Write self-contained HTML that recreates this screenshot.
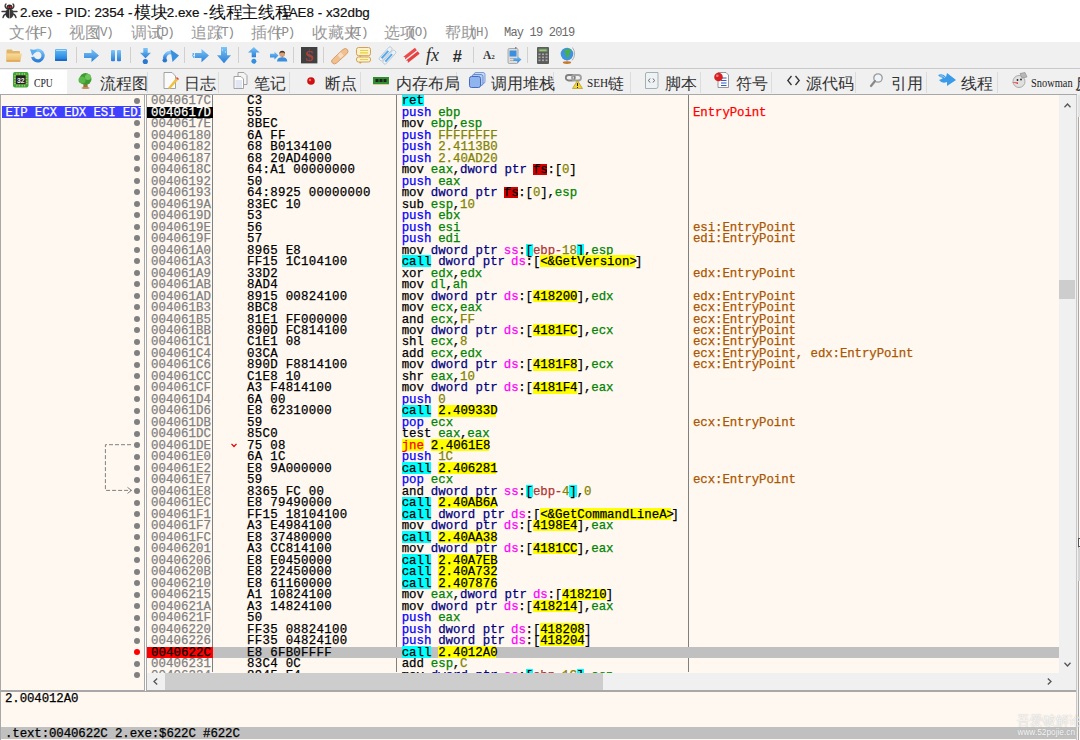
<!DOCTYPE html>
<html><head><meta charset="utf-8"><title>x32dbg</title>
<style>
*{margin:0;padding:0;box-sizing:border-box}
html,body{width:1080px;height:740px;overflow:hidden;background:#fff}
body{position:relative;font-family:"Liberation Sans",sans-serif}
.a{position:absolute}
svg{position:absolute;overflow:visible}
.row{position:absolute;height:11.49px;margin-top:1.6px;-webkit-text-stroke:0.25px currentColor;white-space:pre;font-family:"Liberation Mono",monospace;font-size:12.4px;line-height:11.49px}
.pp{color:#0000ff}
.rb{position:relative;left:1.6px}
.cl{background:#00ffff;color:#000}
.jc{background:#ffff00;color:#ff0000}
.rg{color:#008300}
.vl{color:#828200}
.sz{color:#000080}
.sg{color:#ff00ff}
.fs{background:#d40000;color:#000}
.bk{background:#00ffff}
.br{color:#b03434}
.ad{background:#ffff00;color:#000}
.drow{position:absolute;height:11.7px;width:600px;font-family:"Liberation Mono",monospace;font-size:12.4px;line-height:11.49px;-webkit-text-stroke:0.25px currentColor;color:#000}
.tk{position:absolute;top:0;height:11.7px;padding-top:1.6px;white-space:pre;letter-spacing:0}
.mi{position:absolute;top:26px;font-size:12px;line-height:14px;color:#8a8a8a;white-space:pre;font-family:"Liberation Serif",serif}
.cjm{font-family:"Liberation Sans",sans-serif;font-size:15px;letter-spacing:0}
.tl{position:absolute;top:76px;font-size:12px;line-height:14px;color:#222;white-space:pre;font-family:"Liberation Serif",serif}
.cjt{font-family:"Liberation Sans",sans-serif;font-size:15.5px}
.sep{position:absolute;top:47px;width:1px;height:16px;background:#d0d0d0}
.tsep{position:absolute;top:72px;width:1px;height:21px;background:#dcdcdc}
</style></head><body>

<svg style="left:1px;top:3px" width="17" height="16" viewBox="0 0 17 16">
<g stroke="#3a3a3a" stroke-width="1.4" fill="none" stroke-linecap="round">
<path d="M5 1 Q3 3 5.5 5.5"/><path d="M12 1 Q14 3 11.5 5.5"/><path d="M1 8.5 H5"/><path d="M12 8.5 H16"/>
<path d="M2 14.5 Q3 11 5.5 11"/><path d="M15 14.5 Q14 11 11.5 11"/></g>
<path d="M8.3 5.5 Q4.5 6 4.5 10.5 Q4.8 15 8.3 15.5Z" fill="#2e2e2e"/><path d="M8.7 5.5 Q12.5 6 12.5 10.5 Q12.2 15 8.7 15.5Z" fill="#3a3a3a"/>
<ellipse cx="8.5" cy="4" rx="3" ry="2.6" fill="#2a2a2a"/><circle cx="7.4" cy="4.2" r="0.9" fill="#d02020"/><circle cx="9.6" cy="4.2" r="0.9" fill="#d02020"/></svg>
<div class="a" style="left:20px;top:3.5px;font-size:13.4px;line-height:17px;color:#111;-webkit-text-stroke:0.2px #111;white-space:pre">2.exe - PID: 2354 - </div>
<div class="a" style="left:133.5px;top:3.5px;font-size:17px;line-height:17px;color:#111;white-space:pre">模块</div>
<div class="a" style="left:159.3px;top:3.5px;font-size:13.4px;line-height:17px;color:#111;-webkit-text-stroke:0.2px #111;white-space:pre">: 2.exe - </div>
<div class="a" style="left:209px;top:3.5px;font-size:17px;line-height:17px;color:#111;white-space:pre">线程</div>
<div class="a" style="left:235.5px;top:3.5px;font-size:13.4px;line-height:17px;color:#111;-webkit-text-stroke:0.2px #111;white-space:pre">: </div>
<div class="a" style="left:240.8px;top:3.5px;font-size:17px;line-height:17px;color:#111;white-space:pre">主线程</div>
<div class="a" style="left:277.5px;top:3.5px;font-size:13.4px;line-height:17px;color:#111;-webkit-text-stroke:0.2px #111;white-space:pre"> 1AE8 - x32dbg</div>
<div class="a" style="left:8.9px;top:25px;font-size:15.5px;line-height:16px;color:#9a9a9a;white-space:pre">文件</div>
<div class="a" style="left:33.1px;top:26px;font-size:12.5px;line-height:14px;color:#8a8a8a;white-space:pre;font-family:'Liberation Mono',monospace;letter-spacing:-1.2px">(F)</div>
<div class="a" style="left:69.4px;top:25px;font-size:15.5px;line-height:16px;color:#9a9a9a;white-space:pre">视图</div>
<div class="a" style="left:93.60000000000001px;top:26px;font-size:12.5px;line-height:14px;color:#8a8a8a;white-space:pre;font-family:'Liberation Mono',monospace;letter-spacing:-1.2px">(V)</div>
<div class="a" style="left:130.5px;top:25px;font-size:15.5px;line-height:16px;color:#9a9a9a;white-space:pre">调试</div>
<div class="a" style="left:154.7px;top:26px;font-size:12.5px;line-height:14px;color:#8a8a8a;white-space:pre;font-family:'Liberation Mono',monospace;letter-spacing:-1.2px">(D)</div>
<div class="a" style="left:190.7px;top:25px;font-size:15.5px;line-height:16px;color:#9a9a9a;white-space:pre">追踪</div>
<div class="a" style="left:214.89999999999998px;top:26px;font-size:12.5px;line-height:14px;color:#8a8a8a;white-space:pre;font-family:'Liberation Mono',monospace;letter-spacing:-1.2px">(T)</div>
<div class="a" style="left:250.9px;top:25px;font-size:15.5px;line-height:16px;color:#9a9a9a;white-space:pre">插件</div>
<div class="a" style="left:275.1px;top:26px;font-size:12.5px;line-height:14px;color:#8a8a8a;white-space:pre;font-family:'Liberation Mono',monospace;letter-spacing:-1.2px">(P)</div>
<div class="a" style="left:312px;top:25px;font-size:15.5px;line-height:16px;color:#9a9a9a;white-space:pre">收藏夹</div>
<div class="a" style="left:348.3px;top:26px;font-size:12.5px;line-height:14px;color:#8a8a8a;white-space:pre;font-family:'Liberation Mono',monospace;letter-spacing:-1.2px">(I)</div>
<div class="a" style="left:384.3px;top:25px;font-size:15.5px;line-height:16px;color:#9a9a9a;white-space:pre">选项</div>
<div class="a" style="left:408.5px;top:26px;font-size:12.5px;line-height:14px;color:#8a8a8a;white-space:pre;font-family:'Liberation Mono',monospace;letter-spacing:-1.2px">(O)</div>
<div class="a" style="left:445.4px;top:25px;font-size:15.5px;line-height:16px;color:#9a9a9a;white-space:pre">帮助</div>
<div class="a" style="left:469.59999999999997px;top:26px;font-size:12.5px;line-height:14px;color:#8a8a8a;white-space:pre;font-family:'Liberation Mono',monospace;letter-spacing:-1.2px">(H)</div>
<div class="a" style="left:504px;top:25.5px;font-size:12px;line-height:14px;color:#6a6a6a;white-space:pre;font-family:'Liberation Mono',monospace;letter-spacing:-0.8px">May 19 2019</div>
<div class="a" style="left:0;top:42px;width:1080px;height:27px;background:#f0f0f0;border-bottom:1px solid #c9c9c9"></div>
<div class="sep" style="left:76.0px"></div>
<div class="sep" style="left:130.0px"></div>
<div class="sep" style="left:183.9px"></div>
<div class="sep" style="left:238.4px"></div>
<div class="sep" style="left:293.0px"></div>
<div class="sep" style="left:323.1px"></div>
<div class="sep" style="left:473.1px"></div>
<div class="sep" style="left:527.3px"></div>
<svg style="left:0;top:0" width="1" height="1"><defs>
<linearGradient id="gb" x1="0" y1="0" x2="0" y2="1"><stop offset="0" stop-color="#7cc6f8"/><stop offset="1" stop-color="#2a7ed6"/></linearGradient>
<linearGradient id="gf" x1="0" y1="0" x2="0" y2="1"><stop offset="0" stop-color="#f8dc98"/><stop offset="1" stop-color="#eab868"/></linearGradient>
<linearGradient id="gs" x1="0" y1="0" x2="0" y2="1"><stop offset="0" stop-color="#6cb8f4"/><stop offset="0.5" stop-color="#3d9ee8"/><stop offset="1" stop-color="#1676d8"/></linearGradient>
</defs></svg>
<svg style="left:5.5px;top:49px" width="16.5" height="13" viewBox="0 0 16.5 13">
<path d="M0.5 1.5 Q0.5 0.5 1.5 0.5 H5.5 L7 2 H13 Q14 2 14 3 V12.5 H0.5Z" fill="#e2b66a"/><path d="M0.5 4.5 H16 L14.2 12.5 H0.5Z" fill="url(#gf)"/><path d="M0.5 12 H14.3" stroke="#d89a48" stroke-width="1"/></svg>
<svg style="left:29.8px;top:48.2px" width="15" height="15" viewBox="0 0 15 15">
<path d="M4.2 3.6 A5.3 5.3 0 1 1 2.6 8.8" fill="none" stroke="url(#gb)" stroke-width="3.2"/>
<path d="M0 1.2 L7 2.2 L2.2 7.8Z" fill="#5aaef0"/></svg>
<svg style="left:55px;top:49.2px" width="12" height="11.8" viewBox="0 0 12 11.8">
<rect x="0" y="0" width="12" height="11.8" rx="1.2" fill="url(#gs)"/><rect x="0" y="10.6" width="12" height="1.2" fill="#1858b8"/><rect x="1" y="1" width="10" height="1" fill="#a8dcff"/></svg>
<svg style="left:84.2px;top:48.6px" width="15" height="13" viewBox="0 0 15 13">
<path d="M0 4 H7.5 V0 L15 6.5 L7.5 13 V9 H0Z" fill="url(#gb)"/></svg>
<svg style="left:110.5px;top:49.5px" width="10" height="11.2" viewBox="0 0 10 11.2">
<rect x="0" y="0" width="4" height="11.2" rx="1" fill="url(#gb)"/><rect x="6" y="0" width="4" height="11.2" rx="1" fill="url(#gb)"/></svg>
<svg style="left:140.2px;top:47.7px" width="11" height="16.5" viewBox="0 0 11 16.5">
<path d="M3.3 0 H7.7 V4.8 H11 L5.5 10.2 L0 4.8 H3.3Z" fill="url(#gb)"/><circle cx="5.3" cy="13.5" r="2.6" fill="#2a78d0"/></svg>
<svg style="left:161.5px;top:49.5px" width="17" height="13" viewBox="0 0 17 13">
<path d="M2.5 8.5 Q3.5 1.5 10 2.8" fill="none" stroke="url(#gb)" stroke-width="3.4"/><path d="M8.5 -0.5 L17 5.5 L10.5 12Z" fill="#3a90e0"/><circle cx="2.8" cy="10.2" r="2.3" fill="#2a78d0"/></svg>
<svg style="left:192.1px;top:48.6px" width="17" height="13.2" viewBox="0 0 17 13.2">
<path d="M3 4 H9.5 V0 L17 6.6 L9.5 13.2 V9 H3Z" fill="url(#gb)"/><circle cx="1.3" cy="5" r="1" fill="#5aaef0"/><circle cx="1.8" cy="8" r="0.9" fill="#5aaef0"/><circle cx="0.8" cy="6.8" r="0.7" fill="#5aaef0"/></svg>
<svg style="left:217px;top:47px" width="14" height="16.3" viewBox="0 0 14 16.3">
<path d="M4 0 H10 V8.3 H14 L7 16.3 L0 8.3 H4Z" fill="url(#gb)"/><rect x="5" y="2.5" width="1" height="1" fill="#d8f0ff"/><rect x="8" y="4.5" width="1" height="1" fill="#d8f0ff"/></svg>
<svg style="left:248.1px;top:47px" width="11.7" height="17" viewBox="0 0 11.7 17">
<path d="M5.85 0 L11.7 5.6 H8 V10.2 H3.7 V5.6 H0Z" fill="url(#gb)"/><circle cx="5.9" cy="14.3" r="2.5" fill="#3390e0"/></svg>
<svg style="left:270px;top:50.6px" width="17.3" height="10.5" viewBox="0 0 17.3 10.5">
<path d="M0 2.8 H4.5 V0.8 L8.5 4.6 L4.5 8.4 V6.4 H0Z" fill="url(#gb)"/><circle cx="12.2" cy="3.2" r="2.8" fill="#d8a078"/><path d="M9.3 3 Q9.5 -0.2 12.2 -0.2 Q15 -0.2 15.1 3 Q14 1.4 12.2 1.6 Q10.4 1.4 9.3 3Z" fill="#4a3020"/>
<path d="M12.2 5.2 Q11 6.2 12.2 6.6 Q13.4 6.2 12.2 5.2" fill="#8a5a3a"/><path d="M7 10.5 Q7.3 6.3 12.2 6.3 Q17.1 6.3 17.3 10.5Z" fill="#3a8ee0"/></svg>
<svg style="left:301px;top:47.4px" width="16.4" height="16.4" viewBox="0 0 16 16">
<rect width="16" height="16" fill="#404040"/><text x="8" y="13.5" text-anchor="middle" font-family="Liberation Serif" font-size="15" font-weight="bold" fill="#b04030">S</text><rect x="7.6" y="1.5" width="0.8" height="13" fill="#7a5a8a" opacity="0.6"/></svg>
<svg style="left:330.5px;top:48px" width="17.5" height="16" viewBox="0 0 17.5 16">
<path d="M1.6 11.2 L11.8 1.6 Q14.2 -0.6 16.2 1.4 Q18.2 3.6 15.8 5.8 L5.6 15 Q3.2 17 1.4 15 Q-0.6 13 1.6 11.2Z" fill="#f0c090" stroke="#d49a62" stroke-width="0.9"/>
<path d="M6.5 6.8 L10.8 11" stroke="#e8b080" stroke-width="0.8"/><rect x="7.4" y="5.2" width="4.4" height="4.4" transform="rotate(-44 9.6 7.4)" fill="#f8dcc0"/></svg>
<svg style="left:355.5px;top:47px" width="15" height="17" viewBox="0 0 15 17">
<rect x="0.5" y="0.5" width="14" height="8.2" rx="2" fill="#fcf2c8" stroke="#d4a058"/><rect x="0.5" y="10" width="14" height="5" rx="2" fill="#fcf2c8" stroke="#d4a058"/>
<path d="M4 3.5 H12M4 5.8 H12M4 12.5 H12" stroke="#e8d040" stroke-width="1.2"/>
<path d="M3 8.5 L4 10.2 L6 8.5Z" fill="#d4a058"/><path d="M3 15 L4 17 L6 15Z" fill="#d4a058"/></svg>
<svg style="left:378.7px;top:48px" width="17" height="15" viewBox="0 0 17 15">
<g transform="rotate(-48 8.5 7.5)"><rect x="0" y="3" width="17" height="4" rx="1.6" fill="#eef2f6" stroke="#a8bccc" stroke-width="0.7"/><rect x="2.5" y="4" width="10" height="2" fill="#58a8ec"/>
<rect x="0" y="8" width="17" height="4" rx="1.6" fill="#eef2f6" stroke="#a8bccc" stroke-width="0.7"/><rect x="2.5" y="9" width="10" height="2" fill="#58a8ec"/></g></svg>
<svg style="left:402.8px;top:48px" width="17" height="15" viewBox="0 0 17 15">
<g transform="rotate(-38 8.5 7.5)"><path d="M1 3.5 H16 V6.6 H1 L2.4 5Z" fill="#ec4a4a"/><path d="M1 8 H16 V11.1 H1 L2.4 9.5Z" fill="#e64040"/></g></svg>
<div class="a" style="left:426px;top:44.5px;font-family:'Liberation Serif',serif;font-style:italic;font-size:18px;line-height:20px;color:#2a2a2a">fx</div>
<div class="a" style="left:452.5px;top:45.5px;font-family:'Liberation Sans',sans-serif;font-weight:bold;font-style:italic;font-size:16.5px;line-height:20px;color:#2a2a2a">#</div>
<div class="a" style="left:483px;top:47.5px;font-family:'Liberation Serif',serif;font-weight:bold;font-size:11.5px;line-height:15px;color:#3a3a3a">A<span style="font-size:7px;position:relative;top:0.5px">2</span></div>
<svg style="left:507.4px;top:47px" width="15" height="17" viewBox="0 0 15 17">
<rect x="1" y="1.5" width="10" height="15" rx="1.2" fill="#dcdcdc" stroke="#9a9a9a" stroke-width="0.8"/><rect x="8" y="0" width="1.5" height="2" fill="#888"/><rect x="2.5" y="3.5" width="7" height="6" fill="#3a90e0"/>
<path d="M3 11.5H9M3 13.5H9" stroke="#aaa" stroke-width="0.8"/><path d="M6.5 11.3 H10.5 V9.3 L14.5 12.6 L10.5 15.9 V13.9 H6.5Z" fill="url(#gb)"/></svg>
<svg style="left:537px;top:47px" width="12" height="17" viewBox="0 0 12 17">
<rect x="0" y="0" width="12" height="17" rx="1" fill="#5c5c5c"/><rect x="1.5" y="1.5" width="9" height="3.5" fill="#6a8a6a"/><path d="M2.5 3.2H9.5" stroke="#b8e070" stroke-width="1"/>
<g fill="#a8a8a8"><rect x="1.5" y="6.5" width="2" height="1.6"/><rect x="5" y="6.5" width="2" height="1.6"/><rect x="8.5" y="6.5" width="2" height="1.6"/>
<rect x="1.5" y="9.5" width="2" height="1.6"/><rect x="5" y="9.5" width="2" height="1.6"/><rect x="8.5" y="9.5" width="2" height="1.6"/>
<rect x="1.5" y="12.5" width="2" height="1.6"/><rect x="5" y="12.5" width="2" height="1.6"/><rect x="8.5" y="12.5" width="2" height="1.6"/></g></svg>
<svg style="left:559.7px;top:47px" width="15.5" height="17" viewBox="0 0 15.5 17">
<circle cx="7" cy="7" r="6.3" fill="#3d92e2"/><path d="M3.5 2.8 Q6.5 4.5 4.8 7.5 Q7.8 9.2 7 12 Q10 9.5 9 6.5 Q12 5.5 10.5 2" fill="#48b048"/>
<path d="M12.5 0.5 Q17 7 12 13.5" fill="none" stroke="#b0b0b0" stroke-width="1"/><ellipse cx="7" cy="15.6" rx="4.2" ry="1.4" fill="#c8782a"/><rect x="6.5" y="13" width="1" height="2" fill="#999"/></svg>
<div class="a" style="left:0;top:69px;width:1080px;height:26px;background:#f0f0f0;border-bottom:1px solid #b9b9b9"></div>
<div class="a" style="left:0;top:70px;width:66.5px;height:25px;background:#fff;border-bottom:1px solid #b9b9b9"></div>
<div class="tsep" style="left:147.0px"></div>
<div class="tsep" style="left:217.8px"></div>
<div class="tsep" style="left:288.7px"></div>
<div class="tsep" style="left:359.8px"></div>
<div class="tsep" style="left:455.8px"></div>
<div class="tsep" style="left:552.5px"></div>
<div class="tsep" style="left:629.5px"></div>
<div class="tsep" style="left:700.3px"></div>
<div class="tsep" style="left:770.8px"></div>
<div class="tsep" style="left:855.3px"></div>
<div class="tsep" style="left:926.4px"></div>
<div class="tsep" style="left:997.0px"></div>
<div class="a" style="left:33.5px;top:76px;font-family:'Liberation Serif',serif;font-size:13px;line-height:14px;color:#222;white-space:pre;transform:scaleX(0.74);transform-origin:0 0">CPU</div>
<div class="a" style="left:99.5px;top:77px;font-size:15.5px;line-height:14px;color:#333;white-space:pre">流程图</div>
<div class="a" style="left:183.5px;top:77px;font-size:15.5px;line-height:14px;color:#333;white-space:pre">日志</div>
<div class="a" style="left:253.5px;top:77px;font-size:15.5px;line-height:14px;color:#333;white-space:pre">笔记</div>
<div class="a" style="left:324.5px;top:77px;font-size:15.5px;line-height:14px;color:#333;white-space:pre">断点</div>
<div class="a" style="left:396.3px;top:77px;font-size:15.5px;line-height:14px;color:#333;white-space:pre">内存布局</div>
<div class="a" style="left:491.3px;top:77px;font-size:15.5px;line-height:14px;color:#333;white-space:pre">调用堆栈</div>
<div class="a" style="left:586.7px;top:76px;font-family:'Liberation Serif',serif;font-size:13px;line-height:14px;color:#222;white-space:pre;transform:scaleX(0.86);transform-origin:0 0">SEH</div>
<div class="a" style="left:664.5px;top:77px;font-size:15.5px;line-height:14px;color:#333;white-space:pre">脚本</div>
<div class="a" style="left:735.5px;top:77px;font-size:15.5px;line-height:14px;color:#333;white-space:pre">符号</div>
<div class="a" style="left:806.3px;top:77px;font-size:15.5px;line-height:14px;color:#333;white-space:pre">源代码</div>
<div class="a" style="left:890.5px;top:77px;font-size:15.5px;line-height:14px;color:#333;white-space:pre">引用</div>
<div class="a" style="left:960.7px;top:77px;font-size:15.5px;line-height:14px;color:#333;white-space:pre">线程</div>
<div class="a" style="left:1031px;top:76px;font-family:'Liberation Serif',serif;font-size:13px;line-height:14px;color:#222;white-space:pre;transform:scaleX(0.8);transform-origin:0 0">Snowman</div>
<div class="a" style="left:608px;top:77px;font-size:15.5px;line-height:14px;color:#333;white-space:pre">链</div>
<div class="a" style="left:1074.5px;top:77px;font-size:15.5px;line-height:14px;color:#333;white-space:pre">反</div>
<svg style="left:12.5px;top:72.3px" width="15.5" height="15.5" viewBox="0 0 16 16">
<rect width="16" height="16" rx="2" fill="#3aa83a"/><g stroke="#d8c070" stroke-width="1"><path d="M4 1V3M6.5 1V3M9.5 1V3M12 1V3M4 13V15M6.5 13V15M9.5 13V15M12 13V15M1 4H3M1 6.5H3M1 9.5H3M1 12H3M13 4H15M13 6.5H15M13 9.5H15M13 12H15"/></g>
<rect x="3" y="3.5" width="10" height="9" fill="#222"/><text x="8" y="11" text-anchor="middle" font-family="Liberation Sans" font-weight="bold" font-size="7" fill="#eee">32</text></svg>
<svg style="left:76.5px;top:71.5px" width="17" height="17" viewBox="0 0 17 17">
<path d="M7 10 L6 16 H11 L10 10Z" fill="#a0703a"/><circle cx="8.5" cy="7" r="6" fill="#3f9a32"/><circle cx="5" cy="8" r="3.5" fill="#58b848"/><circle cx="11" cy="5" r="3" fill="#6cc65a"/><ellipse cx="8.5" cy="16" rx="4" ry="1" fill="#c09060"/></svg>
<svg style="left:162.5px;top:71.5px" width="15" height="17" viewBox="0 0 15 17">
<path d="M1 0.5 H9 L12.5 4 V16.5 H1Z" fill="#fafafa" stroke="#9a9a9a" stroke-width="0.9"/><path d="M5 16 L13 6 L15 8 L7 17Z" fill="#f0c040"/><path d="M13 6 L14 5 L16 7 L15 8Z" fill="#e04040"/></svg>
<svg style="left:232.5px;top:71.5px" width="15" height="17" viewBox="0 0 15 17">
<path d="M5 0.5 H11 L14 3.5 V12.5 H5Z" fill="#f4f4f4" stroke="#9a9a9a" stroke-width="0.9"/><path d="M1 4.5 H8 L10.5 7 V16.5 H1Z" fill="#fff" stroke="#9a9a9a" stroke-width="0.9"/>
<g stroke="#aab8d8" stroke-width="0.7"><path d="M2.5 9H9M2.5 11H9M2.5 13H9M2.5 15H9"/></g></svg>
<svg style="left:306.5px;top:76.5px" width="8" height="8" viewBox="0 0 8 8"><circle cx="4" cy="4" r="3.8" fill="#d01010"/><circle cx="3" cy="3" r="1.2" fill="#f07070"/></svg>
<svg style="left:373.3px;top:77px" width="16" height="8" viewBox="0 0 16 8"><rect width="16" height="7" fill="#2f8f2f"/><rect x="2.5" y="2" width="3" height="3" fill="#222"/><rect x="6.5" y="2" width="3" height="3" fill="#222"/><rect x="10.5" y="2" width="3" height="3" fill="#222"/><path d="M1 7V8M3 7V8M5 7V8M7 7V8M9 7V8M11 7V8M13 7V8M15 7V8" stroke="#c8a040"/></svg>
<svg style="left:469px;top:72px" width="17" height="16" viewBox="0 0 17 16">
<rect x="5" y="0.5" width="11" height="11" rx="2" fill="#c8dcf8" stroke="#7a9ad8"/><rect x="3" y="2.5" width="11" height="11" rx="2" fill="#b0ccf4" stroke="#6a8ad0"/><rect x="0.5" y="4.5" width="11" height="11" rx="2" fill="#8fb4ee" stroke="#4a6ac0"/></svg>
<svg style="left:565px;top:73px" width="18" height="16" viewBox="0 0 18 16">
<rect x="0.8" y="2" width="9" height="5.5" rx="2.7" fill="none" stroke="#808080" stroke-width="1.8"/><rect x="7" y="2" width="9" height="5.5" rx="2.7" fill="none" stroke="#a0a0a0" stroke-width="1.8"/>
<path d="M12.5 7.5 L17.5 15.5 H7.5Z" fill="#f4d430" stroke="#a08a10" stroke-width="0.6"/><rect x="12" y="10" width="1" height="3" fill="#222"/><rect x="12" y="14" width="1" height="1" fill="#222"/></svg>
<svg style="left:643.5px;top:71.5px" width="15" height="17" viewBox="0 0 15 17">
<path d="M1.5 2 Q1.5 0.5 3 0.5 H14 V14.5 Q14 16.5 12 16.5 H1.5Z" fill="#eef2f4" stroke="#9aa" stroke-width="0.9"/><path d="M6 6.5 L4.5 8.5 L6 10.5M9 6.5 L10.5 8.5 L9 10.5" fill="none" stroke="#555" stroke-width="0.9"/></svg>
<svg style="left:714px;top:72px" width="15" height="16" viewBox="0 0 15 16">
<path d="M4 0.5 H12 L14.5 3 V15.5 H4Z" fill="#fafafa" stroke="#8a8a9a" stroke-width="0.9"/><g stroke="#3a5ac0" stroke-width="1"><path d="M7 6H12.5M7 8.5H12.5M7 11H12.5M7 13.5H12.5"/></g>
<circle cx="4.5" cy="5" r="4.3" fill="#d82020"/><circle cx="3.3" cy="3.8" r="1.3" fill="#f08080"/></svg>
<svg style="left:786.5px;top:75px" width="13" height="11" viewBox="0 0 13 11"><path d="M4.5 1 L0.8 5.5 L4.5 10M8.5 1 L12.2 5.5 L8.5 10" fill="none" stroke="#333" stroke-width="1.3"/></svg>
<svg style="left:870px;top:73px" width="13" height="14" viewBox="0 0 13 14"><circle cx="8" cy="5" r="4.2" fill="#eef4f8" stroke="#9a9a9a" stroke-width="1.3"/><path d="M5 8 L1 13" stroke="#888" stroke-width="2.2" stroke-linecap="round"/></svg>
<svg style="left:938.4px;top:73px" width="18" height="14" viewBox="0 0 18 14">
<path d="M0 2 Q5 0 8 4 L9 0 L18 7 L9 13 L9 9 Q4 11 1 7 Q4 6 5 5 Q2 5 0 2Z" fill="#3b9be8"/><path d="M2 3 Q5 2 7 5" stroke="#9fd2ff" fill="none"/></svg>
<svg style="left:1010.7px;top:71.5px" width="17" height="16" viewBox="0 0 17 16">
<circle cx="8" cy="9.5" r="6" fill="#e0e0e0" stroke="#9a9a9a" stroke-width="0.8"/><path d="M9 1.5 L14 0.5 L16 5 L11 6Z" fill="#b8b8b8" stroke="#888" stroke-width="0.6"/>
<circle cx="6.5" cy="8" r="0.9" fill="#222"/><circle cx="10" cy="7.5" r="0.9" fill="#222"/><path d="M0.5 10 L7 10.5 L7 12Z" fill="#e83030"/></svg>
<div class="a" style="left:0;top:94px;width:145px;height:597px;background:#fff8f0;border:1px solid #a8a8a8"></div>
<div class="a" style="left:146px;top:94px;width:931px;height:597px;background:#fff8f0;border:1px solid #a8a8a8"></div>
<div class="a" style="left:1077px;top:94px;width:3px;height:646px;background:#f0f0f0"></div>
<div class="a" style="left:1078px;top:95px;width:2px;height:645px;background:#fff8f0;border-left:1px solid #a8a8a8"></div>
<div class="a" style="left:212.0px;top:95px;width:1px;height:577px;background:#808080"></div>
<div class="a" style="left:395.5px;top:95px;width:1px;height:577px;background:#808080"></div>
<div class="a" style="left:687.5px;top:95px;width:1px;height:577px;background:#808080"></div>
<div class="a" style="left:134px;top:97.50px;width:6px;height:6px;border-radius:50%;background:#808080"></div>
<div class="a" style="left:134px;top:120.48px;width:6px;height:6px;border-radius:50%;background:#808080"></div>
<div class="a" style="left:134px;top:131.97px;width:6px;height:6px;border-radius:50%;background:#808080"></div>
<div class="a" style="left:134px;top:143.46px;width:6px;height:6px;border-radius:50%;background:#808080"></div>
<div class="a" style="left:134px;top:154.95px;width:6px;height:6px;border-radius:50%;background:#808080"></div>
<div class="a" style="left:134px;top:166.44px;width:6px;height:6px;border-radius:50%;background:#808080"></div>
<div class="a" style="left:134px;top:177.93px;width:6px;height:6px;border-radius:50%;background:#808080"></div>
<div class="a" style="left:134px;top:189.42px;width:6px;height:6px;border-radius:50%;background:#808080"></div>
<div class="a" style="left:134px;top:200.91px;width:6px;height:6px;border-radius:50%;background:#808080"></div>
<div class="a" style="left:134px;top:212.40px;width:6px;height:6px;border-radius:50%;background:#808080"></div>
<div class="a" style="left:134px;top:223.89px;width:6px;height:6px;border-radius:50%;background:#808080"></div>
<div class="a" style="left:134px;top:235.38px;width:6px;height:6px;border-radius:50%;background:#808080"></div>
<div class="a" style="left:134px;top:246.87px;width:6px;height:6px;border-radius:50%;background:#808080"></div>
<div class="a" style="left:134px;top:258.36px;width:6px;height:6px;border-radius:50%;background:#808080"></div>
<div class="a" style="left:134px;top:269.85px;width:6px;height:6px;border-radius:50%;background:#808080"></div>
<div class="a" style="left:134px;top:281.34px;width:6px;height:6px;border-radius:50%;background:#808080"></div>
<div class="a" style="left:134px;top:292.83px;width:6px;height:6px;border-radius:50%;background:#808080"></div>
<div class="a" style="left:134px;top:304.32px;width:6px;height:6px;border-radius:50%;background:#808080"></div>
<div class="a" style="left:134px;top:315.81px;width:6px;height:6px;border-radius:50%;background:#808080"></div>
<div class="a" style="left:134px;top:327.30px;width:6px;height:6px;border-radius:50%;background:#808080"></div>
<div class="a" style="left:134px;top:338.79px;width:6px;height:6px;border-radius:50%;background:#808080"></div>
<div class="a" style="left:134px;top:350.28px;width:6px;height:6px;border-radius:50%;background:#808080"></div>
<div class="a" style="left:134px;top:361.77px;width:6px;height:6px;border-radius:50%;background:#808080"></div>
<div class="a" style="left:134px;top:373.26px;width:6px;height:6px;border-radius:50%;background:#808080"></div>
<div class="a" style="left:134px;top:384.75px;width:6px;height:6px;border-radius:50%;background:#808080"></div>
<div class="a" style="left:134px;top:396.24px;width:6px;height:6px;border-radius:50%;background:#808080"></div>
<div class="a" style="left:134px;top:407.73px;width:6px;height:6px;border-radius:50%;background:#808080"></div>
<div class="a" style="left:134px;top:419.22px;width:6px;height:6px;border-radius:50%;background:#808080"></div>
<div class="a" style="left:134px;top:430.71px;width:6px;height:6px;border-radius:50%;background:#808080"></div>
<div class="a" style="left:134px;top:442.20px;width:6px;height:6px;border-radius:50%;background:#808080"></div>
<div class="a" style="left:134px;top:453.69px;width:6px;height:6px;border-radius:50%;background:#808080"></div>
<div class="a" style="left:134px;top:465.18px;width:6px;height:6px;border-radius:50%;background:#808080"></div>
<div class="a" style="left:134px;top:476.67px;width:6px;height:6px;border-radius:50%;background:#808080"></div>
<div class="a" style="left:134px;top:488.16px;width:6px;height:6px;border-radius:50%;background:#808080"></div>
<div class="a" style="left:134px;top:499.65px;width:6px;height:6px;border-radius:50%;background:#808080"></div>
<div class="a" style="left:134px;top:511.14px;width:6px;height:6px;border-radius:50%;background:#808080"></div>
<div class="a" style="left:134px;top:522.63px;width:6px;height:6px;border-radius:50%;background:#808080"></div>
<div class="a" style="left:134px;top:534.12px;width:6px;height:6px;border-radius:50%;background:#808080"></div>
<div class="a" style="left:134px;top:545.61px;width:6px;height:6px;border-radius:50%;background:#808080"></div>
<div class="a" style="left:134px;top:557.10px;width:6px;height:6px;border-radius:50%;background:#808080"></div>
<div class="a" style="left:134px;top:568.59px;width:6px;height:6px;border-radius:50%;background:#808080"></div>
<div class="a" style="left:134px;top:580.08px;width:6px;height:6px;border-radius:50%;background:#808080"></div>
<div class="a" style="left:134px;top:591.57px;width:6px;height:6px;border-radius:50%;background:#808080"></div>
<div class="a" style="left:134px;top:603.06px;width:6px;height:6px;border-radius:50%;background:#808080"></div>
<div class="a" style="left:134px;top:614.55px;width:6px;height:6px;border-radius:50%;background:#808080"></div>
<div class="a" style="left:134px;top:626.04px;width:6px;height:6px;border-radius:50%;background:#808080"></div>
<div class="a" style="left:134px;top:637.53px;width:6px;height:6px;border-radius:50%;background:#808080"></div>
<div class="a" style="left:134px;top:649.02px;width:6px;height:6px;border-radius:50%;background:#ff0000"></div>
<div class="a" style="left:134px;top:660.51px;width:6px;height:6px;border-radius:50%;background:#808080"></div>
<div class="a" style="left:134px;top:672.00px;width:6px;height:6px;border-radius:50%;background:#808080"></div>
<div class="a" style="left:1.7px;top:106.1px;width:139.5px;height:11.6px;background:#4040ff"></div>
<div class="row" style="left:5.5px;top:106.1px;color:#fff;letter-spacing:-0.1px">EIP ECX EDX ESI EDI</div>
<svg style="left:100px;top:440px" width="40" height="56" viewBox="0 0 40 56">
<path d="M31 4.7 H5.4 V50.4 H31.5" fill="none" stroke="#808080" stroke-width="1" stroke-dasharray="4 2"/>
<path d="M27.5 47.4 L31.5 50.4 L27.5 53.4" fill="none" stroke="#808080" stroke-width="1"/></svg>
<div class="row" style="left:151px;top:94.60px;letter-spacing:0.08px;color:#808080">0040617C</div>
<div class="row" style="left:247px;top:94.60px;letter-spacing:0.29px;color:#000">C3</div>
<div class="drow" style="left:401.7px;top:94.60px"><span class="tk cl" style="left:0.00px;width:21.87px;">ret</span></div>
<div class="a" style="left:147px;top:106.59px;width:66px;height:11px;background:#000"></div>
<div class="row" style="left:151px;top:106.09px;letter-spacing:0.08px;color:#fff">0040617D</div>
<div class="row" style="left:247px;top:106.09px;letter-spacing:0.29px;color:#000">55</div>
<div class="drow" style="left:401.7px;top:106.09px"><span class="tk pp" style="left:0.00px;width:29.16px;">push</span><span class="tk rg" style="left:36.45px;width:21.87px;">ebp</span></div>
<div class="row" style="left:693px;top:106.09px;letter-spacing:-0.09px;color:#ff0000">EntryPoint</div>
<div class="row" style="left:151px;top:117.58px;letter-spacing:0.08px;color:#808080">0040617E</div>
<div class="row" style="left:247px;top:117.58px;letter-spacing:0.29px;color:#000">8BEC</div>
<div class="drow" style="left:401.7px;top:117.58px"><span class="tk mn" style="left:0.00px;width:21.87px;">mov</span><span class="tk rg" style="left:29.16px;width:21.87px;">ebp</span><span class="tk" style="left:51.03px;width:7.29px;">,</span><span class="tk rg" style="left:58.32px;width:21.87px;">esp</span></div>
<div class="row" style="left:151px;top:129.07px;letter-spacing:0.08px;color:#808080">00406180</div>
<div class="row" style="left:247px;top:129.07px;letter-spacing:0.29px;color:#000">6A FF</div>
<div class="drow" style="left:401.7px;top:129.07px"><span class="tk pp" style="left:0.00px;width:29.16px;">push</span><span class="tk vl" style="left:36.45px;width:58.32px;">FFFFFFFF</span></div>
<div class="row" style="left:151px;top:140.56px;letter-spacing:0.08px;color:#808080">00406182</div>
<div class="row" style="left:247px;top:140.56px;letter-spacing:0.29px;color:#000">68 B0134100</div>
<div class="drow" style="left:401.7px;top:140.56px"><span class="tk pp" style="left:0.00px;width:29.16px;">push</span><span class="tk vl" style="left:36.45px;width:58.32px;">2.4113B0</span></div>
<div class="row" style="left:151px;top:152.05px;letter-spacing:0.08px;color:#808080">00406187</div>
<div class="row" style="left:247px;top:152.05px;letter-spacing:0.29px;color:#000">68 20AD4000</div>
<div class="drow" style="left:401.7px;top:152.05px"><span class="tk pp" style="left:0.00px;width:29.16px;">push</span><span class="tk vl" style="left:36.45px;width:58.32px;">2.40AD20</span></div>
<div class="row" style="left:151px;top:163.54px;letter-spacing:0.08px;color:#808080">0040618C</div>
<div class="row" style="left:247px;top:163.54px;letter-spacing:0.29px;color:#000">64:A1 00000000</div>
<div class="drow" style="left:401.7px;top:163.54px"><span class="tk mn" style="left:0.00px;width:21.87px;">mov</span><span class="tk rg" style="left:29.16px;width:21.87px;">eax</span><span class="tk" style="left:51.03px;width:7.29px;">,</span><span class="tk sz" style="left:58.32px;width:65.61px;">dword ptr</span><span class="tk fs" style="left:131.22px;width:14.58px;">fs</span><span class="tk" style="left:145.80px;width:7.29px;">:</span><span class="tk" style="left:153.09px;width:7.29px;">[</span><span class="tk vl" style="left:160.38px;width:7.29px;">0</span><span class="tk" style="left:167.67px;width:7.29px;">]</span></div>
<div class="row" style="left:151px;top:175.03px;letter-spacing:0.08px;color:#808080">00406192</div>
<div class="row" style="left:247px;top:175.03px;letter-spacing:0.29px;color:#000">50</div>
<div class="drow" style="left:401.7px;top:175.03px"><span class="tk pp" style="left:0.00px;width:29.16px;">push</span><span class="tk rg" style="left:36.45px;width:21.87px;">eax</span></div>
<div class="row" style="left:151px;top:186.52px;letter-spacing:0.08px;color:#808080">00406193</div>
<div class="row" style="left:247px;top:186.52px;letter-spacing:0.29px;color:#000">64:8925 00000000</div>
<div class="drow" style="left:401.7px;top:186.52px"><span class="tk mn" style="left:0.00px;width:21.87px;">mov</span><span class="tk sz" style="left:29.16px;width:65.61px;">dword ptr</span><span class="tk fs" style="left:102.06px;width:14.58px;">fs</span><span class="tk" style="left:116.64px;width:7.29px;">:</span><span class="tk" style="left:123.93px;width:7.29px;">[</span><span class="tk vl" style="left:131.22px;width:7.29px;">0</span><span class="tk" style="left:138.51px;width:7.29px;">]</span><span class="tk" style="left:145.80px;width:7.29px;">,</span><span class="tk rg" style="left:153.09px;width:21.87px;">esp</span></div>
<div class="row" style="left:151px;top:198.01px;letter-spacing:0.08px;color:#808080">0040619A</div>
<div class="row" style="left:247px;top:198.01px;letter-spacing:0.29px;color:#000">83EC 10</div>
<div class="drow" style="left:401.7px;top:198.01px"><span class="tk mn" style="left:0.00px;width:21.87px;">sub</span><span class="tk rg" style="left:29.16px;width:21.87px;">esp</span><span class="tk" style="left:51.03px;width:7.29px;">,</span><span class="tk vl" style="left:58.32px;width:14.58px;">10</span></div>
<div class="row" style="left:151px;top:209.50px;letter-spacing:0.08px;color:#808080">0040619D</div>
<div class="row" style="left:247px;top:209.50px;letter-spacing:0.29px;color:#000">53</div>
<div class="drow" style="left:401.7px;top:209.50px"><span class="tk pp" style="left:0.00px;width:29.16px;">push</span><span class="tk rg" style="left:36.45px;width:21.87px;">ebx</span></div>
<div class="row" style="left:151px;top:220.99px;letter-spacing:0.08px;color:#808080">0040619E</div>
<div class="row" style="left:247px;top:220.99px;letter-spacing:0.29px;color:#000">56</div>
<div class="drow" style="left:401.7px;top:220.99px"><span class="tk pp" style="left:0.00px;width:29.16px;">push</span><span class="tk rg" style="left:36.45px;width:21.87px;">esi</span></div>
<div class="row" style="left:693px;top:220.99px;letter-spacing:-0.09px;color:#aa5500">esi:EntryPoint</div>
<div class="row" style="left:151px;top:232.48px;letter-spacing:0.08px;color:#808080">0040619F</div>
<div class="row" style="left:247px;top:232.48px;letter-spacing:0.29px;color:#000">57</div>
<div class="drow" style="left:401.7px;top:232.48px"><span class="tk pp" style="left:0.00px;width:29.16px;">push</span><span class="tk rg" style="left:36.45px;width:21.87px;">edi</span></div>
<div class="row" style="left:693px;top:232.48px;letter-spacing:-0.09px;color:#aa5500">edi:EntryPoint</div>
<div class="row" style="left:151px;top:243.97px;letter-spacing:0.08px;color:#808080">004061A0</div>
<div class="row" style="left:247px;top:243.97px;letter-spacing:0.29px;color:#000">8965 E8</div>
<div class="drow" style="left:401.7px;top:243.97px"><span class="tk mn" style="left:0.00px;width:21.87px;">mov</span><span class="tk sz" style="left:29.16px;width:65.61px;">dword ptr</span><span class="tk sg" style="left:102.06px;width:14.58px;">ss</span><span class="tk" style="left:116.64px;width:7.29px;">:</span><span class="tk bk" style="left:123.93px;width:7.29px;">[</span><span class="tk br" style="left:131.22px;width:21.87px;">ebp</span><span class="tk br" style="left:153.09px;width:7.29px;">-</span><span class="tk vl" style="left:160.38px;width:14.58px;">18</span><span class="tk bk" style="left:174.96px;width:7.29px;">]</span><span class="tk" style="left:182.25px;width:7.29px;">,</span><span class="tk rg" style="left:189.54px;width:21.87px;">esp</span></div>
<div class="row" style="left:151px;top:255.46px;letter-spacing:0.08px;color:#808080">004061A3</div>
<div class="row" style="left:247px;top:255.46px;letter-spacing:0.29px;color:#000">FF15 1C104100</div>
<div class="drow" style="left:401.7px;top:255.46px"><span class="tk cl" style="left:0.00px;width:29.16px;">call</span><span class="tk sz" style="left:36.45px;width:65.61px;">dword ptr</span><span class="tk sg" style="left:109.35px;width:14.58px;">ds</span><span class="tk" style="left:123.93px;width:7.29px;">:</span><span class="tk" style="left:131.22px;width:7.29px;">[</span><span class="tk ad" style="left:138.51px;width:94.77px;">&lt;&amp;GetVersion&gt;</span><span class="tk" style="left:233.28px;width:7.29px;">]</span></div>
<div class="row" style="left:151px;top:266.95px;letter-spacing:0.08px;color:#808080">004061A9</div>
<div class="row" style="left:247px;top:266.95px;letter-spacing:0.29px;color:#000">33D2</div>
<div class="drow" style="left:401.7px;top:266.95px"><span class="tk mn" style="left:0.00px;width:21.87px;">xor</span><span class="tk rg" style="left:29.16px;width:21.87px;">edx</span><span class="tk" style="left:51.03px;width:7.29px;">,</span><span class="tk rg" style="left:58.32px;width:21.87px;">edx</span></div>
<div class="row" style="left:693px;top:266.95px;letter-spacing:-0.09px;color:#aa5500">edx:EntryPoint</div>
<div class="row" style="left:151px;top:278.44px;letter-spacing:0.08px;color:#808080">004061AB</div>
<div class="row" style="left:247px;top:278.44px;letter-spacing:0.29px;color:#000">8AD4</div>
<div class="drow" style="left:401.7px;top:278.44px"><span class="tk mn" style="left:0.00px;width:21.87px;">mov</span><span class="tk rg" style="left:29.16px;width:14.58px;">dl</span><span class="tk" style="left:43.74px;width:7.29px;">,</span><span class="tk rg" style="left:51.03px;width:14.58px;">ah</span></div>
<div class="row" style="left:151px;top:289.93px;letter-spacing:0.08px;color:#808080">004061AD</div>
<div class="row" style="left:247px;top:289.93px;letter-spacing:0.29px;color:#000">8915 00824100</div>
<div class="drow" style="left:401.7px;top:289.93px"><span class="tk mn" style="left:0.00px;width:21.87px;">mov</span><span class="tk sz" style="left:29.16px;width:65.61px;">dword ptr</span><span class="tk sg" style="left:102.06px;width:14.58px;">ds</span><span class="tk" style="left:116.64px;width:7.29px;">:</span><span class="tk" style="left:123.93px;width:7.29px;">[</span><span class="tk ad" style="left:131.22px;width:43.74px;">418200</span><span class="tk" style="left:174.96px;width:7.29px;">]</span><span class="tk" style="left:182.25px;width:7.29px;">,</span><span class="tk rg" style="left:189.54px;width:21.87px;">edx</span></div>
<div class="row" style="left:693px;top:289.93px;letter-spacing:-0.09px;color:#aa5500">edx:EntryPoint</div>
<div class="row" style="left:151px;top:301.42px;letter-spacing:0.08px;color:#808080">004061B3</div>
<div class="row" style="left:247px;top:301.42px;letter-spacing:0.29px;color:#000">8BC8</div>
<div class="drow" style="left:401.7px;top:301.42px"><span class="tk mn" style="left:0.00px;width:21.87px;">mov</span><span class="tk rg" style="left:29.16px;width:21.87px;">ecx</span><span class="tk" style="left:51.03px;width:7.29px;">,</span><span class="tk rg" style="left:58.32px;width:21.87px;">eax</span></div>
<div class="row" style="left:693px;top:301.42px;letter-spacing:-0.09px;color:#aa5500">ecx:EntryPoint</div>
<div class="row" style="left:151px;top:312.91px;letter-spacing:0.08px;color:#808080">004061B5</div>
<div class="row" style="left:247px;top:312.91px;letter-spacing:0.29px;color:#000">81E1 FF000000</div>
<div class="drow" style="left:401.7px;top:312.91px"><span class="tk mn" style="left:0.00px;width:21.87px;">and</span><span class="tk rg" style="left:29.16px;width:21.87px;">ecx</span><span class="tk" style="left:51.03px;width:7.29px;">,</span><span class="tk vl" style="left:58.32px;width:14.58px;">FF</span></div>
<div class="row" style="left:693px;top:312.91px;letter-spacing:-0.09px;color:#aa5500">ecx:EntryPoint</div>
<div class="row" style="left:151px;top:324.40px;letter-spacing:0.08px;color:#808080">004061BB</div>
<div class="row" style="left:247px;top:324.40px;letter-spacing:0.29px;color:#000">890D FC814100</div>
<div class="drow" style="left:401.7px;top:324.40px"><span class="tk mn" style="left:0.00px;width:21.87px;">mov</span><span class="tk sz" style="left:29.16px;width:65.61px;">dword ptr</span><span class="tk sg" style="left:102.06px;width:14.58px;">ds</span><span class="tk" style="left:116.64px;width:7.29px;">:</span><span class="tk" style="left:123.93px;width:7.29px;">[</span><span class="tk ad" style="left:131.22px;width:43.74px;">4181FC</span><span class="tk" style="left:174.96px;width:7.29px;">]</span><span class="tk" style="left:182.25px;width:7.29px;">,</span><span class="tk rg" style="left:189.54px;width:21.87px;">ecx</span></div>
<div class="row" style="left:693px;top:324.40px;letter-spacing:-0.09px;color:#aa5500">ecx:EntryPoint</div>
<div class="row" style="left:151px;top:335.89px;letter-spacing:0.08px;color:#808080">004061C1</div>
<div class="row" style="left:247px;top:335.89px;letter-spacing:0.29px;color:#000">C1E1 08</div>
<div class="drow" style="left:401.7px;top:335.89px"><span class="tk mn" style="left:0.00px;width:21.87px;">shl</span><span class="tk rg" style="left:29.16px;width:21.87px;">ecx</span><span class="tk" style="left:51.03px;width:7.29px;">,</span><span class="tk vl" style="left:58.32px;width:7.29px;">8</span></div>
<div class="row" style="left:693px;top:335.89px;letter-spacing:-0.09px;color:#aa5500">ecx:EntryPoint</div>
<div class="row" style="left:151px;top:347.38px;letter-spacing:0.08px;color:#808080">004061C4</div>
<div class="row" style="left:247px;top:347.38px;letter-spacing:0.29px;color:#000">03CA</div>
<div class="drow" style="left:401.7px;top:347.38px"><span class="tk mn" style="left:0.00px;width:21.87px;">add</span><span class="tk rg" style="left:29.16px;width:21.87px;">ecx</span><span class="tk" style="left:51.03px;width:7.29px;">,</span><span class="tk rg" style="left:58.32px;width:21.87px;">edx</span></div>
<div class="row" style="left:693px;top:347.38px;letter-spacing:-0.09px;color:#aa5500">ecx:EntryPoint, edx:EntryPoint</div>
<div class="row" style="left:151px;top:358.87px;letter-spacing:0.08px;color:#808080">004061C6</div>
<div class="row" style="left:247px;top:358.87px;letter-spacing:0.29px;color:#000">890D F8814100</div>
<div class="drow" style="left:401.7px;top:358.87px"><span class="tk mn" style="left:0.00px;width:21.87px;">mov</span><span class="tk sz" style="left:29.16px;width:65.61px;">dword ptr</span><span class="tk sg" style="left:102.06px;width:14.58px;">ds</span><span class="tk" style="left:116.64px;width:7.29px;">:</span><span class="tk" style="left:123.93px;width:7.29px;">[</span><span class="tk ad" style="left:131.22px;width:43.74px;">4181F8</span><span class="tk" style="left:174.96px;width:7.29px;">]</span><span class="tk" style="left:182.25px;width:7.29px;">,</span><span class="tk rg" style="left:189.54px;width:21.87px;">ecx</span></div>
<div class="row" style="left:693px;top:358.87px;letter-spacing:-0.09px;color:#aa5500">ecx:EntryPoint</div>
<div class="row" style="left:151px;top:370.36px;letter-spacing:0.08px;color:#808080">004061CC</div>
<div class="row" style="left:247px;top:370.36px;letter-spacing:0.29px;color:#000">C1E8 10</div>
<div class="drow" style="left:401.7px;top:370.36px"><span class="tk mn" style="left:0.00px;width:21.87px;">shr</span><span class="tk rg" style="left:29.16px;width:21.87px;">eax</span><span class="tk" style="left:51.03px;width:7.29px;">,</span><span class="tk vl" style="left:58.32px;width:14.58px;">10</span></div>
<div class="row" style="left:151px;top:381.85px;letter-spacing:0.08px;color:#808080">004061CF</div>
<div class="row" style="left:247px;top:381.85px;letter-spacing:0.29px;color:#000">A3 F4814100</div>
<div class="drow" style="left:401.7px;top:381.85px"><span class="tk mn" style="left:0.00px;width:21.87px;">mov</span><span class="tk sz" style="left:29.16px;width:65.61px;">dword ptr</span><span class="tk sg" style="left:102.06px;width:14.58px;">ds</span><span class="tk" style="left:116.64px;width:7.29px;">:</span><span class="tk" style="left:123.93px;width:7.29px;">[</span><span class="tk ad" style="left:131.22px;width:43.74px;">4181F4</span><span class="tk" style="left:174.96px;width:7.29px;">]</span><span class="tk" style="left:182.25px;width:7.29px;">,</span><span class="tk rg" style="left:189.54px;width:21.87px;">eax</span></div>
<div class="row" style="left:151px;top:393.34px;letter-spacing:0.08px;color:#808080">004061D4</div>
<div class="row" style="left:247px;top:393.34px;letter-spacing:0.29px;color:#000">6A 00</div>
<div class="drow" style="left:401.7px;top:393.34px"><span class="tk pp" style="left:0.00px;width:29.16px;">push</span><span class="tk vl" style="left:36.45px;width:7.29px;">0</span></div>
<div class="row" style="left:151px;top:404.83px;letter-spacing:0.08px;color:#808080">004061D6</div>
<div class="row" style="left:247px;top:404.83px;letter-spacing:0.29px;color:#000">E8 62310000</div>
<div class="drow" style="left:401.7px;top:404.83px"><span class="tk cl" style="left:0.00px;width:29.16px;">call</span><span class="tk ad" style="left:36.45px;width:58.32px;">2.40933D</span></div>
<div class="row" style="left:151px;top:416.32px;letter-spacing:0.08px;color:#808080">004061DB</div>
<div class="row" style="left:247px;top:416.32px;letter-spacing:0.29px;color:#000">59</div>
<div class="drow" style="left:401.7px;top:416.32px"><span class="tk pp" style="left:0.00px;width:21.87px;">pop</span><span class="tk rg" style="left:29.16px;width:21.87px;">ecx</span></div>
<div class="row" style="left:693px;top:416.32px;letter-spacing:-0.09px;color:#aa5500">ecx:EntryPoint</div>
<div class="row" style="left:151px;top:427.81px;letter-spacing:0.08px;color:#808080">004061DC</div>
<div class="row" style="left:247px;top:427.81px;letter-spacing:0.29px;color:#000">85C0</div>
<div class="drow" style="left:401.7px;top:427.81px"><span class="tk mn" style="left:0.00px;width:29.16px;">test</span><span class="tk rg" style="left:36.45px;width:21.87px;">eax</span><span class="tk" style="left:58.32px;width:7.29px;">,</span><span class="tk rg" style="left:65.61px;width:21.87px;">eax</span></div>
<div class="row" style="left:151px;top:439.30px;letter-spacing:0.08px;color:#808080">004061DE</div>
<div class="row" style="left:247px;top:439.30px;letter-spacing:0.29px;color:#000">75 08</div>
<div class="drow" style="left:401.7px;top:439.30px"><span class="tk jc" style="left:0.00px;width:21.87px;">jne</span><span class="tk ad" style="left:29.16px;width:58.32px;">2.4061E8</span></div>
<div class="row" style="left:151px;top:450.79px;letter-spacing:0.08px;color:#808080">004061E0</div>
<div class="row" style="left:247px;top:450.79px;letter-spacing:0.29px;color:#000">6A 1C</div>
<div class="drow" style="left:401.7px;top:450.79px"><span class="tk pp" style="left:0.00px;width:29.16px;">push</span><span class="tk vl" style="left:36.45px;width:14.58px;">1C</span></div>
<div class="row" style="left:151px;top:462.28px;letter-spacing:0.08px;color:#808080">004061E2</div>
<div class="row" style="left:247px;top:462.28px;letter-spacing:0.29px;color:#000">E8 9A000000</div>
<div class="drow" style="left:401.7px;top:462.28px"><span class="tk cl" style="left:0.00px;width:29.16px;">call</span><span class="tk ad" style="left:36.45px;width:58.32px;">2.406281</span></div>
<div class="row" style="left:151px;top:473.77px;letter-spacing:0.08px;color:#808080">004061E7</div>
<div class="row" style="left:247px;top:473.77px;letter-spacing:0.29px;color:#000">59</div>
<div class="drow" style="left:401.7px;top:473.77px"><span class="tk pp" style="left:0.00px;width:21.87px;">pop</span><span class="tk rg" style="left:29.16px;width:21.87px;">ecx</span></div>
<div class="row" style="left:693px;top:473.77px;letter-spacing:-0.09px;color:#aa5500">ecx:EntryPoint</div>
<div class="row" style="left:151px;top:485.26px;letter-spacing:0.08px;color:#808080">004061E8</div>
<div class="row" style="left:247px;top:485.26px;letter-spacing:0.29px;color:#000">8365 FC 00</div>
<div class="drow" style="left:401.7px;top:485.26px"><span class="tk mn" style="left:0.00px;width:21.87px;">and</span><span class="tk sz" style="left:29.16px;width:65.61px;">dword ptr</span><span class="tk sg" style="left:102.06px;width:14.58px;">ss</span><span class="tk" style="left:116.64px;width:7.29px;">:</span><span class="tk bk" style="left:123.93px;width:7.29px;">[</span><span class="tk br" style="left:131.22px;width:21.87px;">ebp</span><span class="tk br" style="left:153.09px;width:7.29px;">-</span><span class="tk vl" style="left:160.38px;width:7.29px;">4</span><span class="tk bk" style="left:167.67px;width:7.29px;">]</span><span class="tk" style="left:174.96px;width:7.29px;">,</span><span class="tk vl" style="left:182.25px;width:7.29px;">0</span></div>
<div class="row" style="left:151px;top:496.75px;letter-spacing:0.08px;color:#808080">004061EC</div>
<div class="row" style="left:247px;top:496.75px;letter-spacing:0.29px;color:#000">E8 79490000</div>
<div class="drow" style="left:401.7px;top:496.75px"><span class="tk cl" style="left:0.00px;width:29.16px;">call</span><span class="tk ad" style="left:36.45px;width:58.32px;">2.40AB6A</span></div>
<div class="row" style="left:151px;top:508.24px;letter-spacing:0.08px;color:#808080">004061F1</div>
<div class="row" style="left:247px;top:508.24px;letter-spacing:0.29px;color:#000">FF15 18104100</div>
<div class="drow" style="left:401.7px;top:508.24px"><span class="tk cl" style="left:0.00px;width:29.16px;">call</span><span class="tk sz" style="left:36.45px;width:65.61px;">dword ptr</span><span class="tk sg" style="left:109.35px;width:14.58px;">ds</span><span class="tk" style="left:123.93px;width:7.29px;">:</span><span class="tk" style="left:131.22px;width:7.29px;">[</span><span class="tk ad" style="left:138.51px;width:131.22px;">&lt;&amp;GetCommandLineA&gt;</span><span class="tk" style="left:269.73px;width:7.29px;">]</span></div>
<div class="row" style="left:151px;top:519.73px;letter-spacing:0.08px;color:#808080">004061F7</div>
<div class="row" style="left:247px;top:519.73px;letter-spacing:0.29px;color:#000">A3 E4984100</div>
<div class="drow" style="left:401.7px;top:519.73px"><span class="tk mn" style="left:0.00px;width:21.87px;">mov</span><span class="tk sz" style="left:29.16px;width:65.61px;">dword ptr</span><span class="tk sg" style="left:102.06px;width:14.58px;">ds</span><span class="tk" style="left:116.64px;width:7.29px;">:</span><span class="tk" style="left:123.93px;width:7.29px;">[</span><span class="tk ad" style="left:131.22px;width:43.74px;">4198E4</span><span class="tk" style="left:174.96px;width:7.29px;">]</span><span class="tk" style="left:182.25px;width:7.29px;">,</span><span class="tk rg" style="left:189.54px;width:21.87px;">eax</span></div>
<div class="row" style="left:151px;top:531.22px;letter-spacing:0.08px;color:#808080">004061FC</div>
<div class="row" style="left:247px;top:531.22px;letter-spacing:0.29px;color:#000">E8 37480000</div>
<div class="drow" style="left:401.7px;top:531.22px"><span class="tk cl" style="left:0.00px;width:29.16px;">call</span><span class="tk ad" style="left:36.45px;width:58.32px;">2.40AA38</span></div>
<div class="row" style="left:151px;top:542.71px;letter-spacing:0.08px;color:#808080">00406201</div>
<div class="row" style="left:247px;top:542.71px;letter-spacing:0.29px;color:#000">A3 CC814100</div>
<div class="drow" style="left:401.7px;top:542.71px"><span class="tk mn" style="left:0.00px;width:21.87px;">mov</span><span class="tk sz" style="left:29.16px;width:65.61px;">dword ptr</span><span class="tk sg" style="left:102.06px;width:14.58px;">ds</span><span class="tk" style="left:116.64px;width:7.29px;">:</span><span class="tk" style="left:123.93px;width:7.29px;">[</span><span class="tk ad" style="left:131.22px;width:43.74px;">4181CC</span><span class="tk" style="left:174.96px;width:7.29px;">]</span><span class="tk" style="left:182.25px;width:7.29px;">,</span><span class="tk rg" style="left:189.54px;width:21.87px;">eax</span></div>
<div class="row" style="left:151px;top:554.20px;letter-spacing:0.08px;color:#808080">00406206</div>
<div class="row" style="left:247px;top:554.20px;letter-spacing:0.29px;color:#000">E8 E0450000</div>
<div class="drow" style="left:401.7px;top:554.20px"><span class="tk cl" style="left:0.00px;width:29.16px;">call</span><span class="tk ad" style="left:36.45px;width:58.32px;">2.40A7EB</span></div>
<div class="row" style="left:151px;top:565.69px;letter-spacing:0.08px;color:#808080">0040620B</div>
<div class="row" style="left:247px;top:565.69px;letter-spacing:0.29px;color:#000">E8 22450000</div>
<div class="drow" style="left:401.7px;top:565.69px"><span class="tk cl" style="left:0.00px;width:29.16px;">call</span><span class="tk ad" style="left:36.45px;width:58.32px;">2.40A732</span></div>
<div class="row" style="left:151px;top:577.18px;letter-spacing:0.08px;color:#808080">00406210</div>
<div class="row" style="left:247px;top:577.18px;letter-spacing:0.29px;color:#000">E8 61160000</div>
<div class="drow" style="left:401.7px;top:577.18px"><span class="tk cl" style="left:0.00px;width:29.16px;">call</span><span class="tk ad" style="left:36.45px;width:58.32px;">2.407876</span></div>
<div class="row" style="left:151px;top:588.67px;letter-spacing:0.08px;color:#808080">00406215</div>
<div class="row" style="left:247px;top:588.67px;letter-spacing:0.29px;color:#000">A1 10824100</div>
<div class="drow" style="left:401.7px;top:588.67px"><span class="tk mn" style="left:0.00px;width:21.87px;">mov</span><span class="tk rg" style="left:29.16px;width:21.87px;">eax</span><span class="tk" style="left:51.03px;width:7.29px;">,</span><span class="tk sz" style="left:58.32px;width:65.61px;">dword ptr</span><span class="tk sg" style="left:131.22px;width:14.58px;">ds</span><span class="tk" style="left:145.80px;width:7.29px;">:</span><span class="tk" style="left:153.09px;width:7.29px;">[</span><span class="tk ad" style="left:160.38px;width:43.74px;">418210</span><span class="tk" style="left:204.12px;width:7.29px;">]</span></div>
<div class="row" style="left:151px;top:600.16px;letter-spacing:0.08px;color:#808080">0040621A</div>
<div class="row" style="left:247px;top:600.16px;letter-spacing:0.29px;color:#000">A3 14824100</div>
<div class="drow" style="left:401.7px;top:600.16px"><span class="tk mn" style="left:0.00px;width:21.87px;">mov</span><span class="tk sz" style="left:29.16px;width:65.61px;">dword ptr</span><span class="tk sg" style="left:102.06px;width:14.58px;">ds</span><span class="tk" style="left:116.64px;width:7.29px;">:</span><span class="tk" style="left:123.93px;width:7.29px;">[</span><span class="tk ad" style="left:131.22px;width:43.74px;">418214</span><span class="tk" style="left:174.96px;width:7.29px;">]</span><span class="tk" style="left:182.25px;width:7.29px;">,</span><span class="tk rg" style="left:189.54px;width:21.87px;">eax</span></div>
<div class="row" style="left:151px;top:611.65px;letter-spacing:0.08px;color:#808080">0040621F</div>
<div class="row" style="left:247px;top:611.65px;letter-spacing:0.29px;color:#000">50</div>
<div class="drow" style="left:401.7px;top:611.65px"><span class="tk pp" style="left:0.00px;width:29.16px;">push</span><span class="tk rg" style="left:36.45px;width:21.87px;">eax</span></div>
<div class="row" style="left:151px;top:623.14px;letter-spacing:0.08px;color:#808080">00406220</div>
<div class="row" style="left:247px;top:623.14px;letter-spacing:0.29px;color:#000">FF35 08824100</div>
<div class="drow" style="left:401.7px;top:623.14px"><span class="tk pp" style="left:0.00px;width:29.16px;">push</span><span class="tk sz" style="left:36.45px;width:65.61px;">dword ptr</span><span class="tk sg" style="left:109.35px;width:14.58px;">ds</span><span class="tk" style="left:123.93px;width:7.29px;">:</span><span class="tk" style="left:131.22px;width:7.29px;">[</span><span class="tk ad" style="left:138.51px;width:43.74px;">418208</span><span class="tk" style="left:182.25px;width:7.29px;">]</span></div>
<div class="row" style="left:151px;top:634.63px;letter-spacing:0.08px;color:#808080">00406226</div>
<div class="row" style="left:247px;top:634.63px;letter-spacing:0.29px;color:#000">FF35 04824100</div>
<div class="drow" style="left:401.7px;top:634.63px"><span class="tk pp" style="left:0.00px;width:29.16px;">push</span><span class="tk sz" style="left:36.45px;width:65.61px;">dword ptr</span><span class="tk sg" style="left:109.35px;width:14.58px;">ds</span><span class="tk" style="left:123.93px;width:7.29px;">:</span><span class="tk" style="left:131.22px;width:7.29px;">[</span><span class="tk ad" style="left:138.51px;width:43.74px;">418204</span><span class="tk" style="left:182.25px;width:7.29px;">]</span></div>
<div class="a" style="left:147px;top:646.62px;width:66px;height:11px;background:#ff0000"></div>
<div class="a" style="left:213px;top:646.62px;width:845.5px;height:11px;background:#c0c0c0"></div>
<div class="row" style="left:151px;top:646.12px;letter-spacing:0.08px;color:#000">0040622C</div>
<div class="row" style="left:247px;top:646.12px;letter-spacing:0.29px;color:#000">E8 6FB0FFFF</div>
<div class="drow" style="left:401.7px;top:646.12px"><span class="tk cl" style="left:0.00px;width:29.16px;">call</span><span class="tk ad" style="left:36.45px;width:58.32px;">2.4012A0</span></div>
<div class="row" style="left:151px;top:657.61px;letter-spacing:0.08px;color:#808080">00406231</div>
<div class="row" style="left:247px;top:657.61px;letter-spacing:0.29px;color:#000">83C4 0C</div>
<div class="drow" style="left:401.7px;top:657.61px"><span class="tk mn" style="left:0.00px;width:21.87px;">add</span><span class="tk rg" style="left:29.16px;width:21.87px;">esp</span><span class="tk" style="left:51.03px;width:7.29px;">,</span><span class="tk vl" style="left:58.32px;width:7.29px;">C</span></div>
<div class="row" style="left:151px;top:669.10px;letter-spacing:0.08px;color:#808080">00406234</div>
<div class="row" style="left:247px;top:669.10px;letter-spacing:0.29px;color:#000">8945 E4</div>
<div class="drow" style="left:401.7px;top:669.10px"><span class="tk mn" style="left:0.00px;width:21.87px;">mov</span><span class="tk sz" style="left:29.16px;width:65.61px;">dword ptr</span><span class="tk sg" style="left:102.06px;width:14.58px;">ss</span><span class="tk" style="left:116.64px;width:7.29px;">:</span><span class="tk bk" style="left:123.93px;width:7.29px;">[</span><span class="tk br" style="left:131.22px;width:21.87px;">ebp</span><span class="tk br" style="left:153.09px;width:7.29px;">-</span><span class="tk vl" style="left:160.38px;width:14.58px;">1C</span><span class="tk bk" style="left:174.96px;width:7.29px;">]</span><span class="tk" style="left:182.25px;width:7.29px;">,</span><span class="tk rg" style="left:189.54px;width:21.87px;">esp</span></div>
<svg style="left:231px;top:442.5px" width="6" height="5" viewBox="0 0 6 5"><path d="M0.5 0.8 L3 3.5 L5.5 0.8" fill="none" stroke="#e00000" stroke-width="1.2"/></svg>
<div class="a" style="left:1058.7px;top:95px;width:17px;height:577.5px;background:#f0f0f0"></div>
<div class="a" style="left:1059px;top:280px;width:16px;height:19px;background:#cdcdcd"></div>
<svg style="left:1064px;top:103px" width="7" height="5" viewBox="0 0 7 5"><path d="M0.5 4.2 L3.5 1 L6.5 4.2" fill="none" stroke="#555" stroke-width="1.3"/></svg>
<svg style="left:1064px;top:661.5px" width="7" height="5" viewBox="0 0 7 5"><path d="M0.5 0.8 L3.5 4 L6.5 0.8" fill="none" stroke="#555" stroke-width="1.3"/></svg>
<div class="a" style="left:147px;top:672.5px;width:929px;height:17px;background:#f0f0f0"></div>
<div class="a" style="left:165px;top:672.5px;width:438px;height:17px;background:#cdcdcd"></div>
<svg style="left:153px;top:678px" width="5" height="7" viewBox="0 0 5 7"><path d="M4.2 0.5 L1 3.5 L4.2 6.5" fill="none" stroke="#555" stroke-width="1.3"/></svg>
<svg style="left:1046.5px;top:678px" width="5" height="7" viewBox="0 0 5 7"><path d="M0.8 0.5 L4 3.5 L0.8 6.5" fill="none" stroke="#555" stroke-width="1.3"/></svg>
<div class="a" style="left:0;top:691px;width:1077px;height:49px;background:#fff8f0;border-left:1px solid #a8a8a8;border-top:1px solid #a8a8a8"></div>
<div class="row" style="left:5px;top:692.5px;color:#000;letter-spacing:-0.1px">2.004012A0</div>
<div class="a" style="left:1px;top:727.3px;width:1076px;height:11.6px;background:#c0c0c0"></div>
<div class="row" style="left:5px;top:727.5px;color:#000;letter-spacing:-0.1px">.text:0040622C 2.exe:$622C #622C</div>
<div class="a" style="left:1017px;top:715px;font-size:12.7px;line-height:12px;color:rgba(255,255,255,0.9);text-shadow:0 0 1px rgba(120,120,120,0.6);white-space:pre">吾爱破解论坛</div>
<div class="a" style="left:1017.4px;top:726.5px;font-size:8.3px;line-height:10px;color:rgba(255,255,255,0.92);text-shadow:0 0 1px rgba(140,140,140,0.5);white-space:pre">www.52pojie.cn</div>
<div class="a" style="left:1076px;top:95px;width:1px;height:645px;background:#c8c8c8"></div>
<div class="a" style="left:1078px;top:95px;width:2px;height:22px;background:#e4e4e4"></div>
<div class="a" style="left:1078px;top:538px;width:2px;height:9px;background:#fff;border-left:1px solid #555;border-top:1px solid #555;border-bottom:1px solid #555"></div>
<div class="a" style="left:1078px;top:548px;width:2px;height:33px;background:#d4d4d4"></div>
</body></html>
